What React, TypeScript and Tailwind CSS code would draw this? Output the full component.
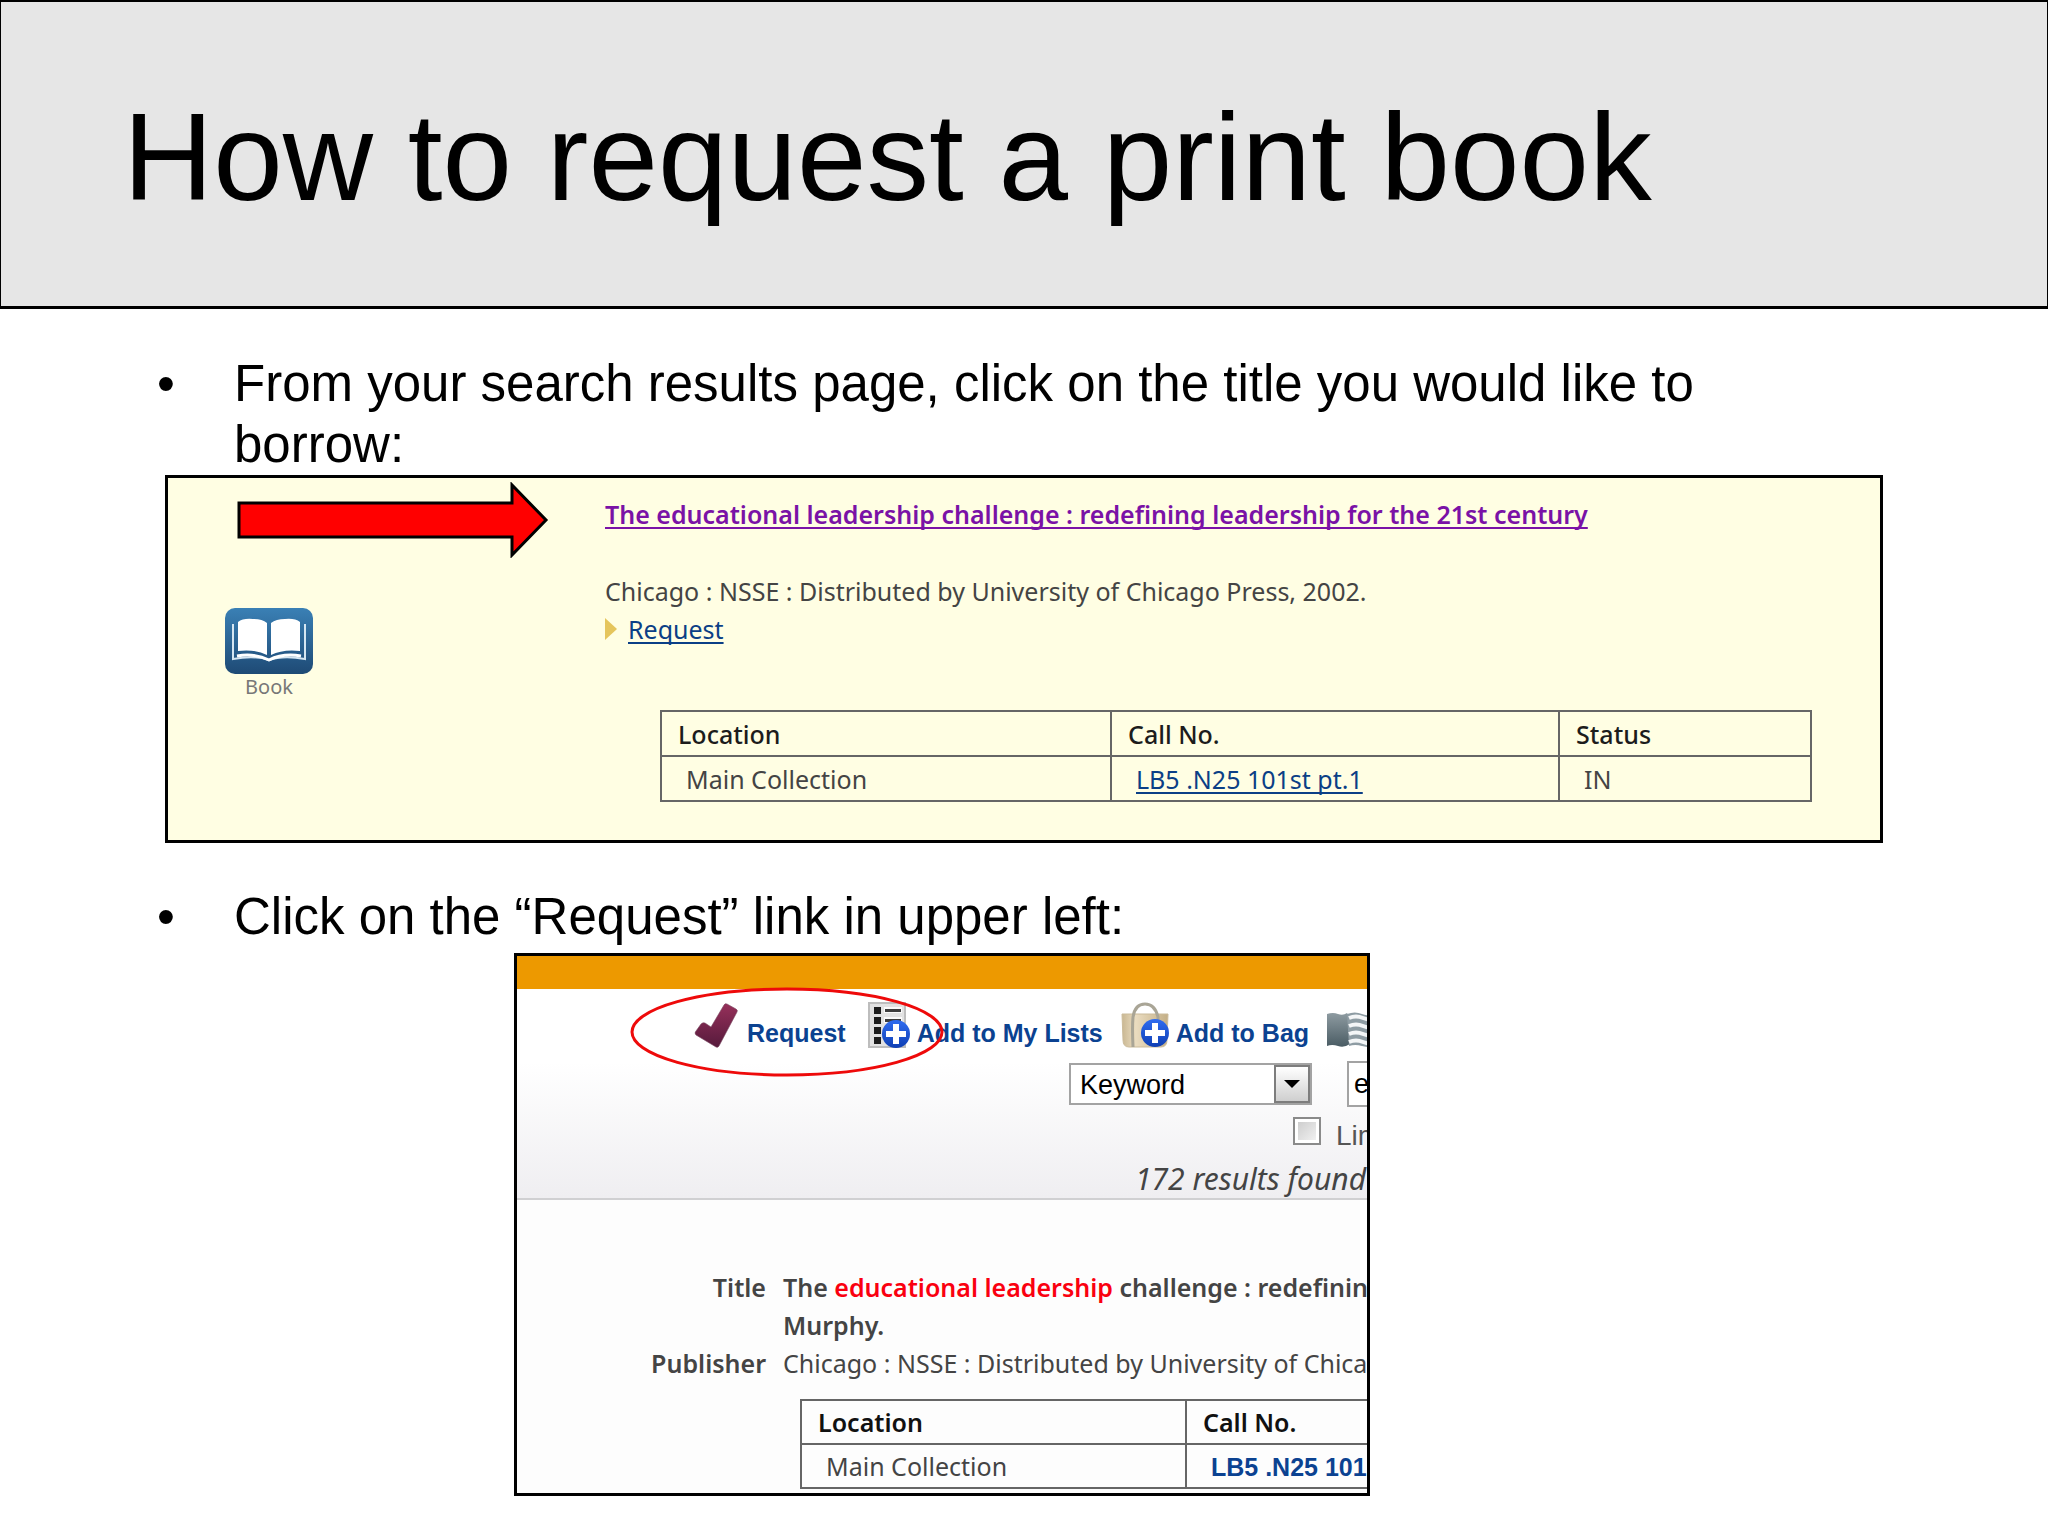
import type { ReactNode } from "react";

const PlusBadge = ({ x, y }: { x: number; y: number }) => (
  <g transform={`translate(${x} ${y})`}>
    <circle r="14" fill="url(#badge)" />
    <path d="M-3 -10h6v7h7v6h-7v7h-6v-7h-7v-6h7z" fill="#fff" />
  </g>
);

const CheckIcon = () => (
  <svg width="46" height="46" viewBox="0 0 46 46" aria-hidden="true">
    <defs>
      <linearGradient id="check" x1="0" y1="0" x2="0" y2="1">
        <stop offset="0" stopColor="#96305a" />
        <stop offset="1" stopColor="#561a3c" />
      </linearGradient>
    </defs>
    <path
      d="M30 3q1-2 3-1l9 5q2 1 1 3L25 44q-1 2-3 1L2 33q-2-2 0-4l5-7q2-2 4-1l6 4z"
      fill="url(#check)"
      stroke="#7b4a62"
      strokeOpacity=".6"
    />
  </svg>
);

const ListIcon = () => (
  <svg width="46" height="46" viewBox="0 0 46 46" aria-hidden="true">
    <defs>
      <linearGradient id="badge" x1="0" y1="0" x2="0" y2="1">
        <stop offset="0" stopColor="#2f6cf0" />
        <stop offset="1" stopColor="#0f3fb4" />
      </linearGradient>
    </defs>
    <rect x="5" y="1" width="36" height="44" fill="#e2e2e2" stroke="#bdbdbd" strokeWidth="2" />
    <path d="M10 5h7v7h-7zM10 15h7v7h-7zM10 25h7v7h-7zM10 35h7v7h-7z" fill="#1d1d1d" />
    <path d="M20 5h18v6H20zM20 15h18v6H20z" fill="#fafafa" />
    <path d="M21 7h16v3H21zM21 17h16v3H21z" fill="#3c3c3c" />
    <PlusBadge x={32} y={32} />
  </svg>
);

const BagIcon = () => (
  <svg width="48" height="46" viewBox="0 0 48 46" aria-hidden="true">
    <defs>
      <linearGradient id="bag" x1="0" y1="0" x2="1" y2="0">
        <stop offset="0" stopColor="#c9b792" />
        <stop offset=".3" stopColor="#eadcc0" />
        <stop offset="1" stopColor="#c4af86" />
      </linearGradient>
    </defs>
    <path d="M1 12h46l-1 26q0 7-6 7H8q-6 0-6-7z" fill="url(#bag)" stroke="#cbbb9a" />
    <path
      d="M12 45q-1-20 0-30Q14 2 24 2t13 13v8"
      fill="none"
      stroke="#a9a596"
      strokeWidth="3"
    />
    <PlusBadge x={34} y={31} />
  </svg>
);

const WaveIcon = () => (
  <svg width="50" height="46" viewBox="0 0 50 46" className="shrink-0" aria-hidden="true">
    <defs>
      <linearGradient id="cover" x1="0" y1="0" x2="0" y2="1">
        <stop offset="0" stopColor="#8e9ba1" />
        <stop offset="1" stopColor="#4a5c64" />
      </linearGradient>
    </defs>
    <path d="M0 12q6-2 11 0t9-1l3 5v26q-6 4-12 2T0 44z" fill="url(#cover)" />
    <path d="M20 12q8-3 15 0t15 0v32q-8 2-15 0t-13 0z" fill="#8e9ca3" />
    <path
      d="M22 16q7-3 14 0t14 0M22 24q7-3 14 0t14 0M22 32q7-3 14 0t14 0M22 40q7-3 14 0t14 0"
      fill="none"
      stroke="#f4f6f7"
      strokeWidth="4"
    />
  </svg>
);

const BookIcon = () => (
  <svg width="88" height="66" viewBox="0 0 88 66" aria-hidden="true">
    <defs>
      <linearGradient id="book" x1="0" y1="0" x2="0" y2="1">
        <stop offset="0" stopColor="#3a80b5" />
        <stop offset="1" stopColor="#1e4a75" />
      </linearGradient>
    </defs>
    <rect width="88" height="66" rx="10" fill="url(#book)" />
    <path
      d="M8 16v35q22-4 36 1 14-5 36-1V16"
      fill="none"
      stroke="#d5e6f2"
      strokeWidth="2"
    />
    <path
      d="M13 14q5-4 15-3 9 0 14 4v32q-12-6-29-4zM46 15q5-4 14-4 10-1 15 3v29q-17-2-29 4z"
      fill="#fff"
    />
    <path d="M12 48q18-3 32 4 14-7 32-4" fill="none" stroke="#fff" strokeWidth="3" />
  </svg>
);

const ArrowCallout = () => (
  <svg width="312" height="76" viewBox="0 0 312 76" aria-hidden="true">
    <path
      d="M2 21h273V3l34 35-34 35V55H2z"
      fill="#f00"
      stroke="#000"
      strokeWidth="3"
    />
  </svg>
);

const Bullet = ({ children }: { children: ReactNode }) => (
  <div className="flex pr-8 text-[51px] leading-[61px] text-black">
    <span className="w-[69px] shrink-0 -indent-2">•</span>
    <p>{children}</p>
  </div>
);

const ToolbarLink = ({ icon, children }: { icon: ReactNode; children: ReactNode }) => (
  <a
    href="#"
    className="flex shrink-0 items-end gap-[7px] text-[25px] leading-[29px] font-bold text-[#0b4291]"
  >
    {icon}
    {children}
  </a>
);

const SearchResult = () => (
  <section className="flex border-3 border-black bg-[#fffee3] pb-[38px] font-['Noto_Sans',sans-serif] text-[25px] leading-[38px] text-[#444]">
    <div className="w-[437px] shrink-0 pt-[4px] pl-[57px]">
      <div className="pl-3">
        <ArrowCallout />
      </div>
      <figure className="mt-[50px] flex w-[88px] flex-col items-center">
        <BookIcon />
        <figcaption className="text-[20px] leading-[26px] text-[#777]">Book</figcaption>
      </figure>
    </div>
    <div className="min-w-0 flex-1 pt-[17px]">
      <a
        href="#"
        className="font-semibold text-[#7a12a6] underline decoration-2 underline-offset-3 [text-decoration-skip-ink:none]"
      >
        The educational leadership challenge : redefining leadership for the 21st century
      </a>
      <p className="mt-[39px]">
        Chicago : NSSE : Distributed by University of Chicago Press, 2002.
      </p>
      <div className="flex items-center gap-[11px]">
        <svg width="12" height="22" viewBox="0 0 12 22" aria-hidden="true">
          <path d="M0 0l12 11L0 22z" fill="#e5c55c" />
        </svg>
        <a
          href="#"
          className="text-[#0b3f86] underline decoration-2 underline-offset-3 [text-decoration-skip-ink:none]"
        >
          Request
        </a>
      </div>
      <table className="mt-[62px] ml-[55px] w-[1152px] table-fixed border-collapse text-left [&_td]:h-[45px] [&_td]:border-2 [&_td]:border-[#666] [&_td]:pl-6 [&_th]:h-[45px] [&_th]:border-2 [&_th]:border-[#666] [&_th]:pl-4 [&_th]:font-medium [&_th]:text-[#1c1c1c]">
        <thead>
          <tr>
            <th className="w-[450px]">Location</th>
            <th className="w-[448px]">Call No.</th>
            <th>Status</th>
          </tr>
        </thead>
        <tbody>
          <tr>
            <td>Main Collection</td>
            <td>
              <a
                href="#"
                className="text-[#0b3f86] underline decoration-2 underline-offset-3 [text-decoration-skip-ink:none]"
              >
                LB5 .N25 101st pt.1
              </a>
            </td>
            <td>IN</td>
          </tr>
        </tbody>
      </table>
    </div>
  </section>
);

const SearchForm = () => (
  <form>
    <div className="mt-[13px] flex items-center gap-[35px] pl-[552px] text-[27px]">
      <div className="relative shrink-0">
        <select
          aria-label="Search type"
          className="block h-[42px] w-[243px] appearance-none border-2 border-[#a3a3a3] bg-white pl-[9px] text-black"
        >
          <option>Keyword</option>
        </select>
        <span className="pointer-events-none absolute top-[2px] right-[2px] flex h-[38px] w-[36px] items-center justify-center border-2 border-[#7d7d7d] bg-linear-to-b from-white to-[#cfcfcf]">
          <svg width="16" height="8" viewBox="0 0 16 8" aria-hidden="true">
            <path d="M0 0h16L8 8z" />
          </svg>
        </span>
      </div>
      <input
        aria-label="Search terms"
        defaultValue="educational leadership"
        className="h-[46px] w-[300px] shrink-0 border-2 border-[#a3a3a3] bg-white px-[5px] text-black"
      />
    </div>
    <label className="mt-[6px] flex gap-[15px] pl-[776px] text-[28px] leading-[46px] whitespace-nowrap text-[#555]">
      <input
        type="checkbox"
        className="mt-1 size-[28px] shrink-0 appearance-none border-2 border-[#8a8a8a] bg-linear-to-br from-[#c8c8c8] to-[#f6f6f6] shadow-[inset_0_0_0_3px_#fff]"
      />
      Limit search
    </label>
  </form>
);

const CatalogRecord = () => (
  <section className="relative ml-[349px] w-[856px] max-w-full overflow-hidden border-3 border-black bg-[#fdfdfd] pb-[4px]">
    <div className="h-[33px] bg-[#ed9900]" />
    <header className="border-b-2 border-[#d0d0d2] bg-linear-to-b from-white from-35% to-[#efeef1]">
      <nav className="flex items-end gap-[18px] pt-[13px] pl-[177px]">
        <ToolbarLink icon={<CheckIcon />}>Request</ToolbarLink>
        <ToolbarLink icon={<ListIcon />}>Add to My Lists</ToolbarLink>
        <ToolbarLink icon={<BagIcon />}>Add to Bag</ToolbarLink>
        <WaveIcon />
      </nav>
      <SearchForm />
      <p className="mt-px pl-[618px] font-['Noto_Sans',sans-serif] text-[30px] leading-[38px] whitespace-nowrap text-[#444] italic">
        172 results found
      </p>
    </header>
    <div className="pt-[68px] font-['Noto_Sans',sans-serif] text-[25px] leading-[38px] text-[#444]">
      <dl className="grid grid-cols-[249px_1fr] gap-x-[17px] whitespace-nowrap">
        <dt className="text-right font-semibold">Title</dt>
        <dd className="font-semibold">
          The <span className="text-[#fa0010]">educational leadership</span> challenge : redefining
          <br />
          Murphy.
        </dd>
        <dt className="text-right font-semibold">Publisher</dt>
        <dd>Chicago : NSSE : Distributed by University of Chicago</dd>
      </dl>
      <table className="mt-[17px] ml-[283px] w-[900px] table-fixed border-collapse text-left [&_td]:h-[44px] [&_td]:border-2 [&_td]:border-[#666] [&_td]:pl-6 [&_th]:h-[44px] [&_th]:border-2 [&_th]:border-[#666] [&_th]:pl-4 [&_th]:font-semibold [&_th]:text-[#111]">
        <thead>
          <tr>
            <th className="w-[385px]">Location</th>
            <th>Call No.</th>
          </tr>
        </thead>
        <tbody>
          <tr>
            <td>Main Collection</td>
            <td>
              <a href="#" className="font-['Liberation_Sans',sans-serif] font-bold text-[#0b4291]">
                LB5 .N25 101st pt.1
              </a>
            </td>
          </tr>
        </tbody>
      </table>
    </div>
    <svg
      width="316"
      height="90"
      viewBox="0 0 316 90"
      className="pointer-events-none absolute top-[31px] left-[112px]"
      aria-hidden="true"
    >
      <ellipse cx="158" cy="45" rx="155" ry="43" fill="none" stroke="#ee0a0a" strokeWidth="3" />
    </svg>
  </section>
);

const App = () => {
  return (
    <main className="bg-white pb-10 font-['Liberation_Sans',Arial,sans-serif]">
      <h1 className="border-x border-t-2 border-b-3 border-black bg-[#e6e6e6] pt-[85px] pb-[79px] pl-[122px] text-[125px] leading-[140px] text-black">
        How to request a print book
      </h1>
      <ol className="px-[165px] pt-[44px]">
        <li>
          <Bullet>From your search results page, click on the title you would like to borrow:</Bullet>
          <SearchResult />
        </li>
        <li className="mt-[43px] space-y-[6px]">
          <Bullet>Click on the “Request” link in upper left:</Bullet>
          <CatalogRecord />
        </li>
      </ol>
    </main>
  );
};

export default App;
